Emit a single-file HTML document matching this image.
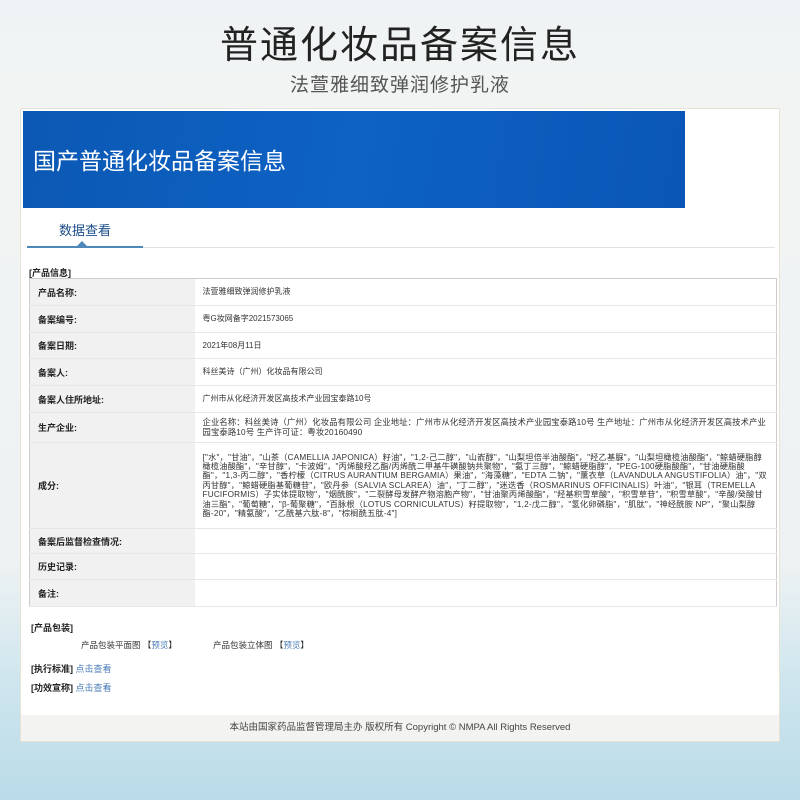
<!DOCTYPE html>
<html><head><meta charset="utf-8"><style>
*{margin:0;padding:0;box-sizing:border-box}
body{width:800px;height:800px;overflow:hidden;position:relative;font-family:"Liberation Sans","Noto Sans CJK SC",sans-serif;
background:linear-gradient(180deg,#eef3f5 0%,#f2f4f3 12%,#eef2f3 70%,#cfe6ee 85%,#b9dbe8 100%);}
.t1{position:absolute;top:14px;left:0;width:800px;text-align:center;font-size:38px;color:#222;letter-spacing:2px}
.t2{position:absolute;top:70px;left:0;width:800px;text-align:center;font-size:19px;color:#555;letter-spacing:1px}
.card{position:absolute;left:20px;top:108px;width:760px;height:634px;background:#fff;border:1px solid #e8e2d6}
.hdr{position:absolute;left:2px;top:2px;width:662px;height:97px;background:linear-gradient(100deg,#0c58b4 0%,#0d62c4 50%,#0a56b6 100%)}
.hdr span{position:absolute;left:10px;top:31px;color:#fff;font-size:23px}
.tab{position:absolute;left:38px;top:111px;font-size:13px;color:#1a4c8a}
.tabline{position:absolute;left:6px;top:138px;width:748px;height:1px;background:#e3e3e3}
.tabact{position:absolute;left:6px;top:137px;width:116px;height:2px;background:#4d88b8}
.arr{position:absolute;left:56px;top:132px;width:0;height:0;border-left:5px solid transparent;border-right:5px solid transparent;border-bottom:5px solid #4d88b8}
.sec{position:absolute;font-size:9px;font-weight:bold;color:#222}
table{position:absolute;left:8px;top:169px;width:748px;border-collapse:collapse;border:1px solid #ccc;font-size:8px;color:#333}
td{border-bottom:1px solid #e6e6e6;vertical-align:middle}
td.l{width:165px;background:#f1f1f1;font-weight:bold;font-size:9px;padding-left:8px;color:#222}
td.v{padding:0 8px;line-height:9.5px}
.lk{color:#4a7cb8}
.ft{position:absolute;left:0;top:606px;width:758px;height:26px;background:#f3f3f1;font-size:9.5px;color:#444;text-align:center;line-height:26px}
.misc{position:absolute;font-size:8.5px;color:#333}
</style></head><body>
<div class="t1">普通化妆品备案信息</div>
<div class="t2">法萱雅细致弹润修护乳液</div>
<div class="card">
<div class="hdr"><span>国产普通化妆品备案信息</span></div>
<div class="tab">数据查看</div>
<div class="tabline"></div><div class="tabact"></div><div class="arr"></div>
<div class="sec" style="left:8px;top:157px">[产品信息]</div>
<table>
<tr style="height:27px"><td class="l">产品名称:</td><td class="v">法萱雅细致弹润修护乳液</td></tr>
<tr style="height:27px"><td class="l">备案编号:</td><td class="v">粤G妆网备字2021573065</td></tr>
<tr style="height:26px"><td class="l">备案日期:</td><td class="v">2021年08月11日</td></tr>
<tr style="height:27px"><td class="l">备案人:</td><td class="v">科丝美诗（广州）化妆品有限公司</td></tr>
<tr style="height:27px"><td class="l">备案人住所地址:</td><td class="v">广州市从化经济开发区高技术产业园宝泰路10号</td></tr>
<tr style="height:30px"><td class="l">生产企业:</td><td class="v" style="font-size:8.3px;letter-spacing:.15px">企业名称：科丝美诗（广州）化妆品有限公司 企业地址：广州市从化经济开发区高技术产业园宝泰路10号 生产地址：广州市从化经济开发区高技术产业园宝泰路10号 生产许可证：粤妆20160490</td></tr>
<tr style="height:86px"><td class="l">成分:</td><td class="v" style="font-size:8.2px;line-height:9.4px;letter-spacing:.2px">["水"，"甘油"，"山茶（CAMELLIA JAPONICA）籽油"，"1,2-己二醇"，"山嵛醇"，"山梨坦倍半油酸酯"，"羟乙基脲"，"山梨坦橄榄油酸酯"，"鲸蜡硬脂醇橄榄油酸酯"，"辛甘醇"，"卡波姆"，"丙烯酸羟乙酯/丙烯酰二甲基牛磺酸钠共聚物"，"氨丁三醇"，"鲸蜡硬脂醇"，"PEG-100硬脂酸酯"，"甘油硬脂酸酯"，"1,3-丙二醇"，"香柠檬（CITRUS AURANTIUM BERGAMIA）果油"，"海藻糖"，"EDTA 二钠"，"薰衣草（LAVANDULA ANGUSTIFOLIA）油"，"双丙甘醇"，"鲸蜡硬脂基葡糖苷"，"欧丹参（SALVIA SCLAREA）油"，"丁二醇"，"迷迭香（ROSMARINUS OFFICINALIS）叶油"，"银耳（TREMELLA FUCIFORMIS）子实体提取物"，"烟酰胺"，"二裂酵母发酵产物溶胞产物"，"甘油聚丙烯酸酯"，"羟基积雪草酸"，"积雪草苷"，"积雪草酸"，"辛酸/癸酸甘油三酯"，"葡萄糖"，"β-葡聚糖"，"百脉根（LOTUS CORNICULATUS）籽提取物"，"1,2-戊二醇"，"氢化卵磷脂"，"肌肽"，"神经酰胺 NP"，"聚山梨醇酯-20"，"精氨酸"，"乙酰基六肽-8"，"棕榈酰五肽-4"]</td></tr>
<tr style="height:25px"><td class="l">备案后监督检查情况:</td><td class="v"></td></tr>
<tr style="height:26px"><td class="l">历史记录:</td><td class="v"></td></tr>
<tr style="height:27px"><td class="l">备注:</td><td class="v"></td></tr>
</table>
<div class="sec" style="left:10px;top:512px">[产品包装]</div>
<div class="misc" style="left:60px;top:530px">产品包装平面图 【<span class="lk">预览</span>】</div>
<div class="misc" style="left:192px;top:530px">产品包装立体图 【<span class="lk">预览</span>】</div>
<div class="sec" style="left:10px;top:553px">[执行标准] <span class="lk" style="font-weight:normal">点击查看</span></div>
<div class="sec" style="left:10px;top:572px">[功效宣称] <span class="lk" style="font-weight:normal">点击查看</span></div>
<div class="ft">本站由国家药品监督管理局主办 版权所有 Copyright © NMPA All Rights Reserved</div>
</div>
</body></html>
